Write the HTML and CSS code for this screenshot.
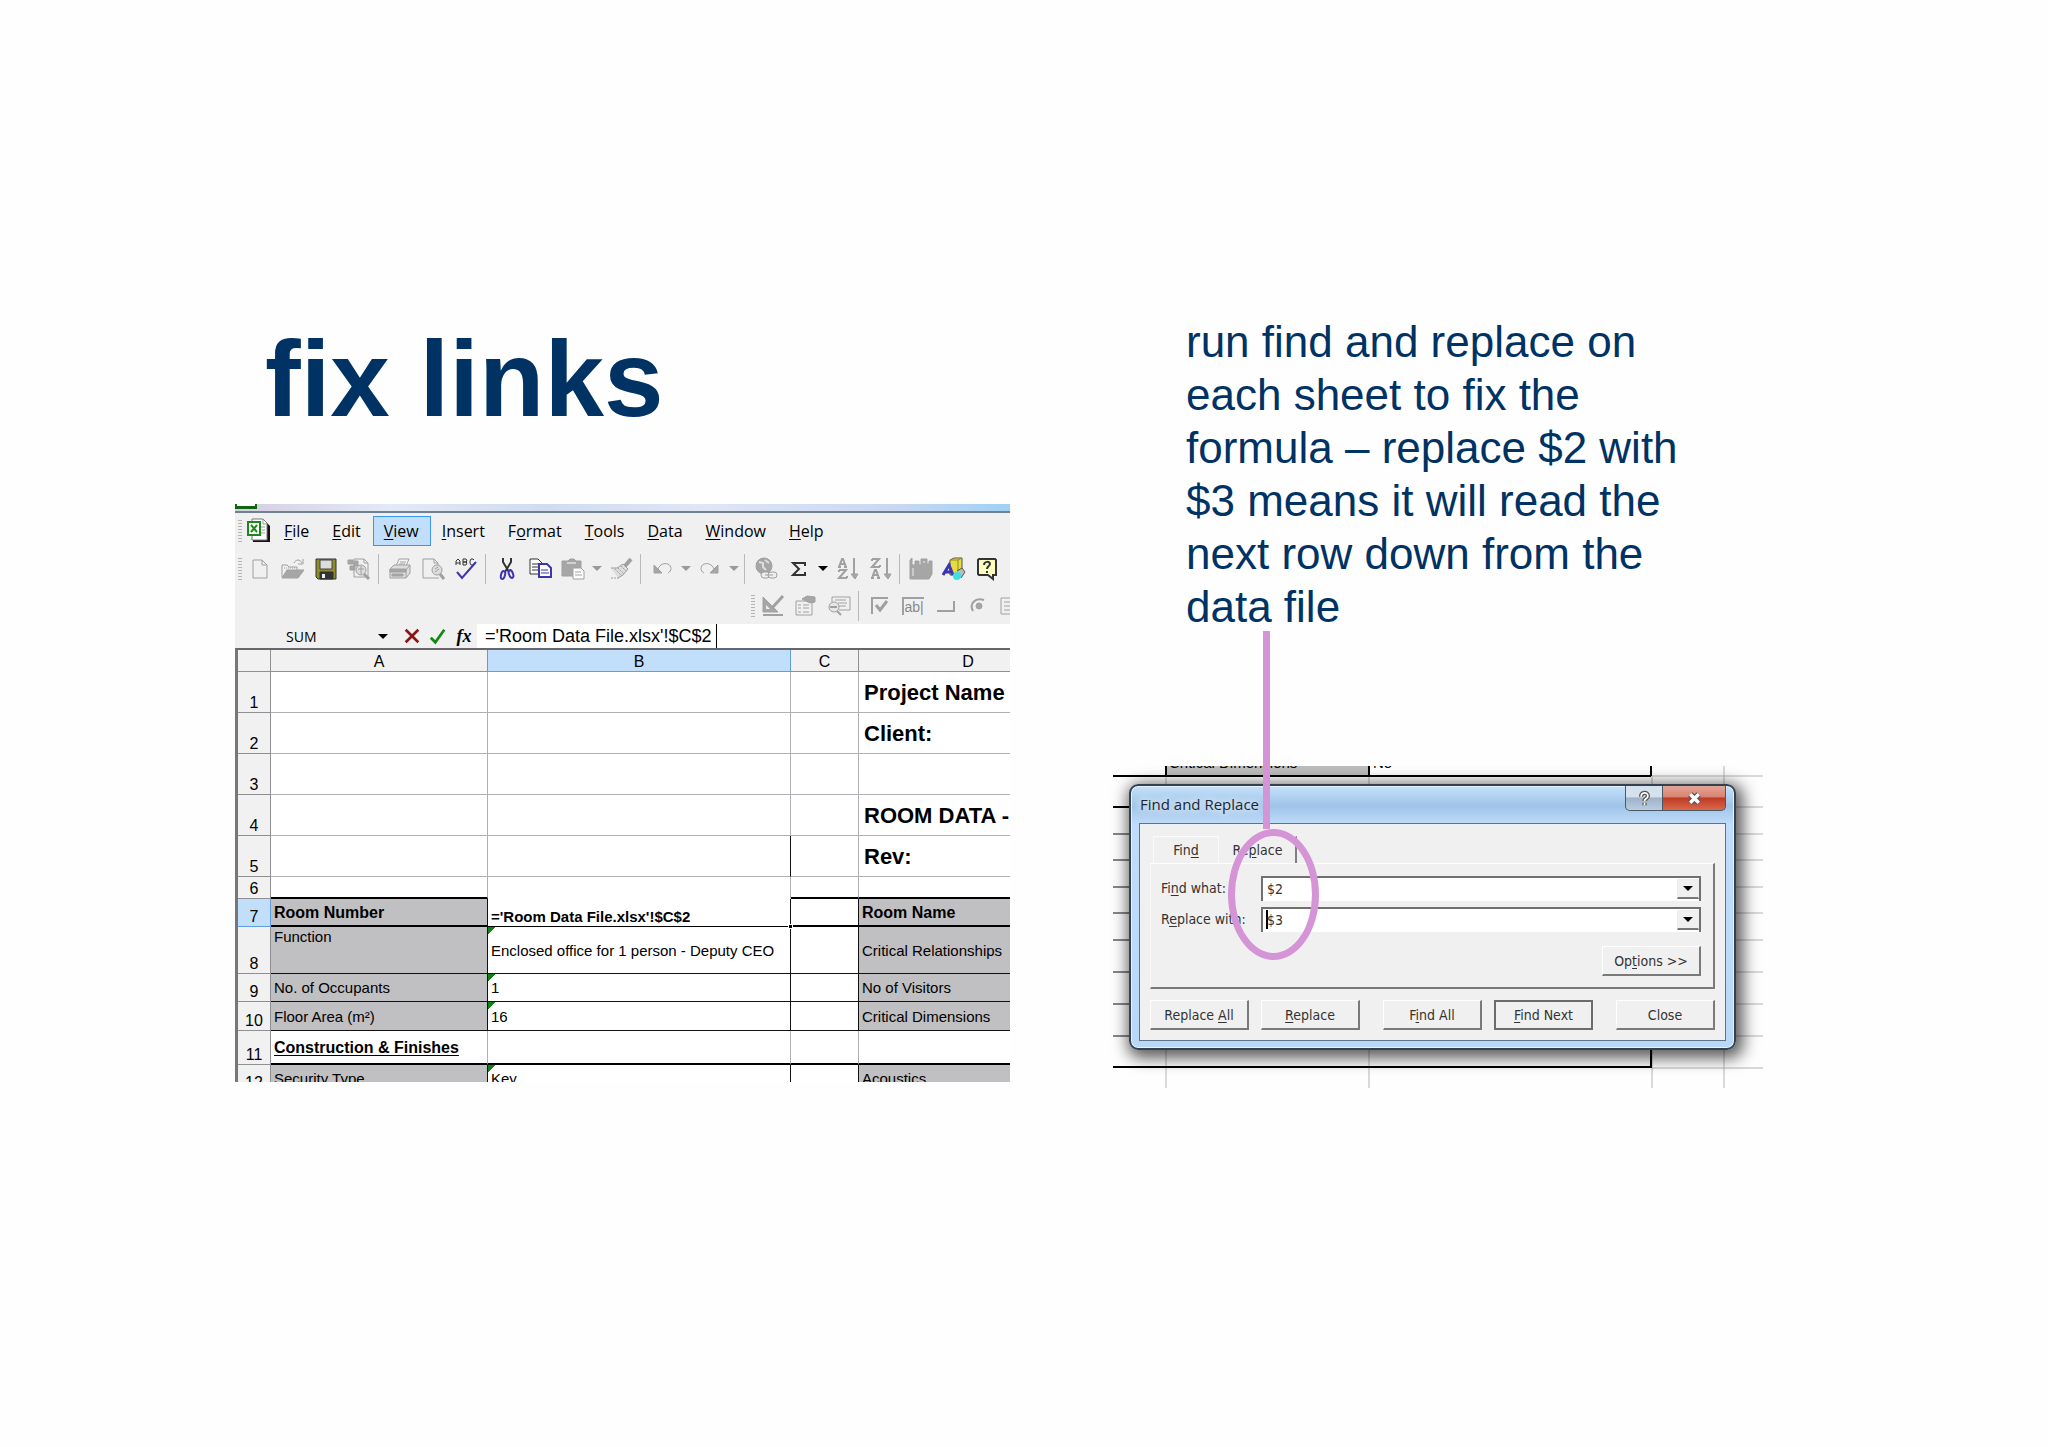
FILE: index.html
```html
<!DOCTYPE html>
<html lang="en">
<head>
<meta charset="utf-8">
<meta name="viewport" content="width=device-width, initial-scale=1">
<title>fix links</title>
<link rel="stylesheet" href="styles.css">
</head>
<body>
<main class="slide">
  <section class="left">
    <h1 class="title">fix links</h1>
    <div class="excel">
      <div class="titlebar"><span class="titlebar-icon"></span></div>
      <nav class="menubar">
        <span class="grip"></span>
        <svg class="app-icon" viewBox="0 0 26 26" aria-hidden="true"><path d="M6 3h12l5 5v16H6z" fill="#111"/><path d="M5 1h11l4 4v17H5z" fill="#fff" stroke="#777"/><path d="M16 1v5h4M13 9h5M15 12h3M13 15h5" fill="none" stroke="#999"/><path d="M1 4h12v13H1z" fill="#fff" stroke="#178a17" stroke-width="2"/><path d="M4 7l6 7M10 7l-6 7" stroke="#178a17" stroke-width="2"/></svg>
        <button class="menu"><u>F</u>ile</button>
        <button class="menu"><u>E</u>dit</button>
        <button class="menu menu-active"><u>V</u>iew</button>
        <button class="menu"><u>I</u>nsert</button>
        <button class="menu">F<u>o</u>rmat</button>
        <button class="menu"><u>T</u>ools</button>
        <button class="menu"><u>D</u>ata</button>
        <button class="menu"><u>W</u>indow</button>
        <button class="menu"><u>H</u>elp</button>
      </nav>
      <div class="toolbar">
        <span class="grip"></span>
        <button class="tool" aria-label="New"><svg viewBox="0 0 24 24"><path d="M5 3h9l5 5v13H5zM14 3v5h5"/></svg></button>
        <button class="tool" aria-label="Open"><svg viewBox="0 0 24 24"><path d="M1 20V8h5l2 2h8v3"/><path class="fill" d="M6 13h17l-6 8H1z"/><path d="M13 6c2-4 6-4 8 0M22 2v5h-5"/><path d="M3 11h12" stroke-dasharray="1 1"/></svg></button>
        <button class="tool" aria-label="Save"><svg viewBox="0 0 24 24"><path d="M2 2h20v20H4l-2-2z" fill="#8c8c28" stroke="#333"/><path d="M6 3h12v9H6z" fill="#ddd" stroke="#444"/><path d="M6 15h13v7H6z" fill="#333" stroke="#333"/><path d="M8 17h3v4H8z" fill="#eee" stroke="none"/></svg></button>
        <button class="tool" aria-label="Search"><svg viewBox="0 0 24 24"><path d="M7 2h10l4 4v14H7zM17 2v4h4"/><path class="fill" d="M1 3h5v4H1zM3 9h5v4H3zM7 4h4v5H7z"/><circle cx="14" cy="13" r="5" fill="#ddd"/><path d="M11 12h6M14 9v8"/><path d="M17 17l5 5" stroke-width="3"/></svg></button>
        <span class="sep"></span>
        <button class="tool" aria-label="Print"><svg viewBox="0 0 24 24"><path d="M8 9l3-7h10l-3 7z" fill="#f4f4f4"/><path d="M12 5h6M11 7h6"/><path d="M2 12l4-4h16v8l-4 5H2z" fill="#ddd"/><path class="fill" d="M2 12h16v3H2zM4 17h11v2H4z"/><path d="M18 13l4-5M18 21v-8"/></svg></button>
        <button class="tool" aria-label="Print preview"><svg viewBox="0 0 24 24"><path d="M18 21H2V2h11l4 4v3M13 2v4h4"/><circle cx="16" cy="13" r="5" fill="#ddd"/><path d="M14 12l3-2M14 15l4-3"/><path d="M19 17l4 5" stroke-width="3"/></svg></button>
        <button class="tool" aria-label="Spelling"><svg viewBox="0 0 24 24"><path d="M2 8V4l2-2 2 2v4M2 6h4M9 2v6h3l1-2-1-1H9h3l1-1-1-2H9M20 3l-1-1h-2l-1 2v2l1 2h2l1-1" stroke="#333"/><path d="M3 15l5 6L22 5" stroke="#3c35b0" stroke-width="2"/></svg></button>
        <span class="sep"></span>
        <button class="tool" aria-label="Cut"><svg viewBox="0 0 24 24"><path d="M8 1v4l6 10M16 1v4l-6 10" stroke="#333" stroke-width="2"/><ellipse cx="8" cy="18" rx="2" ry="4" stroke="#3c35b0" stroke-width="2" transform="rotate(15 8 18)"/><ellipse cx="16" cy="17" rx="2" ry="4" stroke="#3c35b0" stroke-width="2" transform="rotate(-20 16 17)"/></svg></button>
        <button class="tool" aria-label="Copy"><svg viewBox="0 0 24 24"><path d="M2 2h8l4 4v11H2z" fill="#fff" stroke="#333"/><path d="M4 7h7M4 10h7M4 13h7" stroke="#333"/><path d="M11 7h8l4 4v9H11z" fill="#fff" stroke="#3c35b0" stroke-width="2"/><path d="M13 13h7M13 16h8" stroke="#3c35b0"/></svg></button>
        <button class="tool" aria-label="Paste"><svg viewBox="0 0 24 24"><path class="fill" d="M1 4h6l2-2h4l2 2h5v15H1z"/><path d="M6 6h9" stroke="#fff"/><path d="M12 11h8l3 3v8H12z" fill="#fff"/><path d="M14 15h6M14 18h7"/></svg></button>
        <button class="drop" aria-label="Paste options"></button>
        <button class="tool" aria-label="Format painter"><svg viewBox="0 0 24 24"><path d="M22 2l-6 7" stroke-width="4"/><path d="M2 11h6l6-4 5 5-5 6-5 3" fill="#ddd"/><path d="M6 12l7 7M9 11l6 6M12 9l5 5M2 21h8" stroke-dasharray="2 1"/></svg></button>
        <span class="sep"></span>
        <button class="tool" aria-label="Undo"><svg viewBox="0 0 24 24"><path class="fill" d="M4 8v8h8z"/><path d="M8 12c2-5 6-6 10-5 4 2 4 7 0 9"/></svg></button>
        <button class="drop" aria-label="Undo list"></button>
        <button class="tool" aria-label="Redo"><svg viewBox="0 0 24 24"><path class="fill" d="M20 8v8h-8z"/><path d="M16 12c-2-5-6-6-10-5-4 2-4 7 0 9"/></svg></button>
        <button class="drop" aria-label="Redo list"></button>
        <span class="sep"></span>
        <button class="tool" aria-label="Hyperlink"><svg viewBox="0 0 24 24"><circle class="fill" cx="10" cy="9" r="8"/><path d="M5 5l4 1v4l3 3M11 3l4 3" stroke="#ddd" stroke-width="2"/><rect x="7" y="15" width="9" height="6" rx="3" fill="#eee"/><rect x="14" y="15" width="9" height="6" rx="3" fill="#eee"/><path d="M11 18h8"/></svg></button>
        <button class="tool" aria-label="AutoSum"><svg viewBox="0 0 24 24"><path d="M18 9V6H6l6 6-6 6h12v-3" stroke="#333" stroke-width="2"/></svg></button>
        <button class="drop drop-on" aria-label="AutoSum functions"></button>
        <button class="tool" aria-label="Sort ascending"><svg viewBox="0 0 24 24"><path d="M4 10l3-8h1l3 8M5 7h5M3 10h3M9 10h3M4 13h7l-7 8h8M4 13v2M12 21v-2M19 1v19" stroke-width="2"/><path class="fill" d="M16 17h7l-3 5z"/></svg></button>
        <button class="tool" aria-label="Sort descending"><svg viewBox="0 0 24 24"><path d="M4 2h7l-7 8h8M4 2v2M12 10V8M4 21l3-8h1l3 8M5 18h5M3 21h3M9 21h3M19 1v19" stroke-width="2"/><path class="fill" d="M16 17h7l-3 5z"/></svg></button>
        <span class="sep"></span>
        <button class="tool" aria-label="Chart"><svg viewBox="0 0 24 24"><path class="fill" d="M1 21V3l2-2v7h3V4h4v4h2V2h6v5h2V4h3v13l-3 5H1z"/><path d="M14 5h2M4 11v8" stroke="#eee"/></svg></button>
        <button class="tool" aria-label="Drawing"><svg viewBox="0 0 24 24"><path d="M8 3l4-2h8v14l-4 3H8z" fill="#e8dc3c" stroke="#555"/><path d="M8 3h8v14M16 3l4-2" stroke="#8c8c28"/><path d="M1 18L7 8l4 10M3 15h7" stroke="#3c35b0" stroke-width="3"/><path d="M15 14l5-3 3 4-4 6" fill="#bbb" stroke="#555"/><circle cx="15" cy="19" r="4" fill="#3ce0e8" stroke="none"/></svg></button>
        <button class="tool" aria-label="Help"><svg viewBox="0 0 24 24"><path d="M4 2h16l1 1v15h-3v4l-5-4H4l-1-1V3z" fill="#fffcc0" stroke="#333" stroke-width="2"/><path d="M9 8c0-4 6-4 6-1 0 2-3 2-3 5M12 14v2" stroke="#333" stroke-width="2"/></svg></button>
      </div>
      <div class="toolbar toolbar-controls">
        <span class="grip"></span>
        <button class="tool" aria-label="Design mode"><svg viewBox="0 0 24 24"><path class="fill" d="M2 3l15 15H2z"/><path d="M5 11l4 4H5z" fill="#eee" stroke="none"/><path d="M2 21h20" stroke-width="2"/><path d="M22 2L11 14" stroke-width="3"/></svg></button>
        <button class="tool" aria-label="Properties"><svg viewBox="0 0 24 24"><path d="M2 7h16v14H2zM4 11h3M9 11h6M4 14h3M9 14h6M4 18h3M9 18h6"/><path class="fill" d="M8 5l5-3 8 1v5l-5 1z"/></svg></button>
        <button class="tool" aria-label="View code"><svg viewBox="0 0 24 24"><path d="M5 8V3h18v13H12M8 6h11M11 9h9M12 12h7"/><circle cx="7" cy="13" r="5" fill="#e6e6e6"/><path d="M3 13h7M10 17l4 4" stroke-width="2"/></svg></button>
        <span class="sep"></span>
        <button class="tool" aria-label="Check box"><svg viewBox="0 0 24 24"><path d="M4 20V4h16" stroke-width="2"/><path d="M8 11l4 5 7-9" stroke-width="3"/></svg></button>
        <button class="tool tool-ab" aria-label="Text box">ab|</button>
        <button class="tool" aria-label="Command button"><svg viewBox="0 0 24 24"><path d="M3 17h17V7" stroke-width="2"/></svg></button>
        <button class="tool" aria-label="Option button"><svg viewBox="0 0 24 24"><path d="M6 17C2 10 8 3 17 6" stroke-width="2"/><circle class="fill" cx="12" cy="12" r="3"/></svg></button>
        <button class="tool" aria-label="List box"><svg viewBox="0 0 24 24"><path d="M1 4h20v16H1zM4 8h9M4 12h9M4 16h9"/></svg></button>
      </div>
      <div class="formula-bar">
        <input class="name-box" aria-label="Name box" value="SUM">
        <button class="drop drop-on" aria-label="Name list"></button>
        <button class="fx-button" aria-label="Cancel"><svg viewBox="0 0 20 20"><path d="M3 3l14 14M17 3L3 17" stroke="#8c1414" stroke-width="3"/></svg></button>
        <button class="fx-button" aria-label="Enter"><svg viewBox="0 0 20 20"><path d="M2 12l5 5L17 3" stroke="#128a12" stroke-width="3"/></svg></button>
        <button class="fx-button fx" aria-label="Insert function">fx</button>
        <div class="formula"><input class="formula-input" aria-label="Formula" value="='Room Data File.xlsx'!$C$2"><span class="caret"></span></div>
      </div>
      <div class="sheet">
        <table class="cells">
          <colgroup><col class="col-head"><col class="col-a"><col class="col-b"><col class="col-c"><col class="col-d"></colgroup>
          <thead><tr class="r-head"><th></th><th>A</th><th class="sel">B</th><th>C</th><th>D</th></tr></thead>
          <tbody>
            <tr class="r-tall"><th>1</th><td></td><td></td><td></td><td class="big">Project Name</td></tr>
            <tr class="r-tall"><th>2</th><td></td><td></td><td></td><td class="big">Client:</td></tr>
            <tr class="r-tall"><th>3</th><td></td><td></td><td></td><td></td></tr>
            <tr class="r-tall"><th>4</th><td></td><td></td><td></td><td class="big">ROOM DATA -</td></tr>
            <tr class="r-tall"><th>5</th><td></td><td class="ink-right"></td><td></td><td class="big">Rev:</td></tr>
            <tr class="r-6"><th>6</th><td class="thick"></td><td class="open"></td><td class="thick"></td><td class="thick"></td></tr>
            <tr class="r-7"><th class="sel">7</th><td class="gray thick name ink-right">Room Number</td><td class="editing ink-right">='Room Data File.xlsx'!$C$2<span class="handle"></span></td><td class="thick ink-right"></td><td class="gray thick name">Room Name</td></tr>
            <tr class="r-8 ink"><th>8</th><td class="gray top">Function</td><td class="flag">Enclosed office for 1 person - Deputy CEO</td><td></td><td class="gray">Critical Relationships</td></tr>
            <tr class="r-9 ink"><th>9</th><td class="gray">No. of Occupants</td><td class="flag">1</td><td></td><td class="gray">No of Visitors</td></tr>
            <tr class="r-10 ink"><th>10</th><td class="gray">Floor Area (m²)</td><td class="flag">16</td><td></td><td class="gray">Critical Dimensions</td></tr>
            <tr class="r-11"><th>11</th><td class="thick section"><u>Construction &amp; Finishes</u></td><td class="thick"></td><td class="thick"></td><td class="thick"></td></tr>
            <tr class="r-12 ink"><th>12</th><td class="gray">Security Type</td><td class="flag">Key</td><td></td><td class="gray">Acoustics</td></tr>
          </tbody>
        </table>
      </div>
    </div>
  </section>

  <section class="right">
    <p class="lead">run find and replace on each sheet to fix the formula – replace $2 with $3 means it will read the next row down from the data file</p>
    <div class="shot">
      <svg class="grid-lines" viewBox="0 0 650 322" preserveAspectRatio="none" aria-hidden="true">
        <rect x="52" y="0" width="204" height="10" fill="#bdbdbd"/>
        <g font-family="Liberation Sans, sans-serif" font-size="15"><text x="56" y="2">Critical Dimensions</text><text x="260" y="2">No</text></g>
        <path d="M53 10v312M256 10v312M539 10v312M611 0v322M539 10h111M539 41h111M539 68h111M539 94h111M539 121h111M539 147h111M539 174h111M539 206h111M539 238h111M539 270h111M539 302h111" stroke="#b4b4b4" fill="none"/>
        <path d="M0 68h40M0 94h40M0 121h40M0 147h40M0 174h40M0 206h40M0 238h40M0 270h40" stroke="#111" fill="none"/>
        <path d="M0 10h538M0 41h40M0 301h538M538 302V270M538 0v10M53 0v10M256 0v10" stroke="#000" stroke-width="2" fill="none"/>
      </svg>
      <form class="dialog" onsubmit="return false">
        <header class="caption">
          <span class="caption-text">Find and Replace</span>
          <button class="cap-button cap-help" type="button" aria-label="Help"><svg viewBox="0 0 20 20"><path d="M6 8c0-6 8-6 8-1 0 3-4 3-4 6M10 15v3" stroke="#555" stroke-width="5"/><path d="M6 8c0-6 8-6 8-1 0 3-4 3-4 6M10 15v3" stroke="#fff" stroke-width="2"/></svg></button>
          <button class="cap-button cap-close" type="button" aria-label="Close window"><svg viewBox="0 0 20 20"><path d="M5 5l10 10M15 5L5 15" stroke="#555" stroke-width="7"/><path d="M5 5l10 10M15 5L5 15" stroke="#fff" stroke-width="4"/></svg></button>
        </header>
        <div class="client">
          <div class="tabs">
            <button class="tab" type="button">Fin<u>d</u></button>
            <button class="tab tab-active" type="button">Re<u>p</u>lace</button>
          </div>
          <div class="panel">
            <div class="field">
              <label class="field-label" for="find">Fi<u>n</u>d what:</label>
              <div class="combo"><input class="combo-input" id="find" value="$2"><button class="combo-button" type="button" aria-label="Find history"></button></div>
            </div>
            <div class="field">
              <label class="field-label" for="replace">R<u>e</u>place with:</label>
              <div class="combo"><span class="caret caret-replace"></span><input class="combo-input" id="replace" value="$3"><button class="combo-button" type="button" aria-label="Replace history"></button></div>
            </div>
            <button class="push options" type="button">Op<u>t</u>ions &gt;&gt;</button>
          </div>
          <div class="actions">
            <div class="pair"><button class="push" type="button">Replace <u>A</u>ll</button><button class="push" type="button"><u>R</u>eplace</button></div>
            <div class="pair"><button class="push" type="button">F<u>i</u>nd All</button><button class="push push-default" type="button"><u>F</u>ind Next</button></div>
            <button class="push" type="button">Close</button>
          </div>
        </div>
      </form>
      <span class="callout-line"></span>
      <span class="callout-ring"></span>
    </div>
  </section>
</main>
</body>
</html>
```
FILE: styles.css
```css
* { box-sizing: border-box; }
body {
  margin: 0;
  background: #fefefe;
  color: #000;
  font-family: "Liberation Sans", Arial, sans-serif;
}
button, input { margin: 0; padding: 0; border: 0; background: none; font: inherit; color: inherit; border-radius: 0; }
u { text-underline-offset: 2px; }

.slide {
  display: grid;
  grid-template-columns: minmax(0, 775fr) minmax(0, 650fr);
  column-gap: 103px;
  min-height: 100vh;
  padding: 315px 285px 0 235px;
  align-items: start;
}
.title {
  margin: 4px 0 65px;
  padding-left: 30px;
  font-size: 107px;
  line-height: 120px;
  font-variant-ligatures: none;
  color: #003264;
}
.lead {
  max-width: 578px;
  margin: 0 0 133px;
  padding-left: 73px;
  font-size: 44px;
  line-height: 53px;
  color: #003264;
}

/* Spreadsheet window */
.excel { height: 578px; overflow: hidden; background: #f0f0f1; }
.titlebar {
  height: 9px;
  border-bottom: 2px solid #71808e;
  background: linear-gradient(90deg, #d3cfe0, #e4e9f6 20%, #cfdcf0 40%, #dfe6f6 60%, #c9d8f2 85%, #9fd0f6);
}
.titlebar-icon { display: block; width: 22px; height: 5px; border: solid #126312; border-width: 0 2px 3px; background: #fff; }
.menubar { display: flex; align-items: center; height: 37px; padding-bottom: 2px; font-family: "Open Sans", "Noto Sans", sans-serif; font-size: 16px; }
.grip { flex: none; width: 4px; height: 22px; margin: 0 1px 0 3px; background: repeating-linear-gradient(#b4b4b4 0 1px, #f0f0f1 1px 3px); }
.app-icon { flex: none; width: 26px; height: 26px; margin: 0 0 0 4px; }
.menu { height: 30px; padding: 0 11px 0 10px; border: 1px solid transparent; white-space: nowrap; }
.menu-active { border-color: #3c96f0; background: #c1dffb; }

.toolbar { display: flex; align-items: center; height: 37px; }
.toolbar-controls { padding-left: 513px; }
.tool { flex: none; display: flex; align-items: center; justify-content: center; width: 33px; height: 30px; }
.tool svg { width: 24px; height: 24px; fill: none; stroke: #a0a0a0; stroke-width: 1; }
.tool .fill { fill: #a6a6a6; }
.tool-ab { width: 22px; height: 18px; margin: 0 5px 0 6px; border: solid #a0a0a0; border-width: 2px 0 0 2px; font-size: 14px; color: #888; }
.sep { flex: none; width: 1px; height: 30px; margin: 0 4px 0 3px; background: #b9b9b9; }
.drop { flex: none; width: 15px; height: 30px; padding: 0 3px; color: #999; }
.drop::before, .combo-button::before { content: ""; display: block; width: 0; margin: 0 auto; border: 5px solid transparent; border-top: 5px solid currentColor; border-bottom: 0; }
.drop-on { color: #000; }

.formula-bar { display: flex; align-items: stretch; height: 24px; }
.name-box { width: 140px; padding-left: 51px; font-family: "Open Sans", "Noto Sans", sans-serif; font-size: 14px; }
.formula-bar .drop { height: 24px; margin-right: 9px; }
.fx-button { flex: none; display: flex; align-items: center; justify-content: center; width: 26px; }
.fx-button svg { width: 18px; height: 18px; fill: none; }
.fx { font-family: "Liberation Serif", serif; font-size: 18px; font-style: italic; font-weight: bold; }
.formula { position: relative; flex: 1; background: #fff; }
.formula-input { width: 100%; height: 24px; padding-left: 8px; font-size: 18px; }
.caret { position: absolute; left: 239px; top: 0; width: 1px; height: 24px; background: #000; }

.sheet { border-top: 2px solid #66666b; border-left: 3px solid #77777b; overflow: hidden; }
.cells { width: 840px; table-layout: fixed; border-collapse: separate; border-spacing: 0; font-size: 15px; line-height: 18px; background: #fff; }
.col-head { width: 33px; }
.col-a { width: 217px; }
.col-b { width: 303px; }
.col-c { width: 68px; }
.col-d { width: 219px; }
.cells th, .cells td { padding: 1px 3px 0; border: solid #b0b0b4; border-width: 0 1px 1px 0; white-space: nowrap; text-align: left; vertical-align: middle; }
.cells th { padding: 0; border-color: #909094; background: #f1f1f2; font-size: 16px; font-weight: normal; text-align: center; vertical-align: bottom; }
.cells .sel { border-color: #5f9fe0; background: #c1dffb; }
.r-head { height: 22px; }
.r-tall { height: 41px; }
.r-6 { height: 22px; }
.r-7 { height: 28px; }
.r-8 { height: 47px; }
.r-9 { height: 28px; }
.r-10 { height: 29px; }
.r-11 { height: 34px; }
.r-12 { height: 28px; }
.cells .big { padding: 2px 5px 0; font-size: 22px; font-weight: bold; }
.cells .gray { background: #c0bfc1; }
.cells .name { padding-top: 2px; font-size: 16px; font-weight: bold; }
.cells .section { font-size: 16px; font-weight: bold; }
.cells .top { vertical-align: top; }
.cells .ink td { border-color: #111; }
.cells .ink-right { border-right-color: #111; }
.cells .thick { border-bottom: 2px solid #000; }
.cells .open { border-bottom-color: #fff; }
.cells .editing { position: relative; border-bottom-color: #000; font-size: 15px; font-weight: bold; vertical-align: bottom; }
.handle { position: absolute; right: -3px; bottom: -3px; width: 5px; height: 5px; border: 1px solid #fff; background: #000; }
.cells .flag { background: linear-gradient(135deg, #128012 5px, transparent 5px) no-repeat #fff; }

/* Find and Replace window */
.shot { position: relative; padding: 18px 27px 38px 16px; }
.grid-lines { position: absolute; inset: 0; width: 100%; height: 100%; overflow: hidden; }
.dialog {
  position: relative;
  height: 266px;
  padding: 0 8px 8px;
  border: 2px solid #35414f;
  border-radius: 9px;
  background: linear-gradient(#c4e1fb, #9fc4e8 20px, #bfdcfa 38px, #b9d8f8);
  box-shadow: 3px 4px 16px 4px rgba(0, 0, 0, .65), inset 0 0 0 1px #e3f2fd;
  font-family: "DejaVu Sans Condensed", "DejaVu Sans", sans-serif;
  font-size: 14px;
  color: #333;
}
.caption { display: flex; align-items: flex-start; height: 37px; }
.caption-text { flex: 1; padding-left: 1px; font-family: "Open Sans", "Noto Sans", sans-serif; font-size: 15px; line-height: 36px; color: #1c2733; text-shadow: 0 0 8px #fff, 0 0 8px #fff; }
.cap-button { display: flex; align-items: center; justify-content: center; height: 25px; border: 1px solid #4b5866; border-top: 0; }
.cap-button svg { width: 17px; height: 17px; fill: none; }
.cap-help { width: 38px; border-radius: 0 0 0 5px; background: linear-gradient(#d5e2ee 45%, #9fb3c8 50%, #b9cde0); }
.cap-close { width: 63px; border-left: 0; border-radius: 0 0 5px 0; background: linear-gradient(#e5a597, #d98372 45%, #bf3a24 50%, #d8694e); }
.client { height: 218px; padding: 12px 10px 9px; border: 1px solid #5f7386; background: #f0f0f0; }
.tabs { display: flex; height: 27px; padding-left: 3px; }
.tab { width: 66px; height: 27px; border: 1px solid #fafafa; border-bottom: 0; }
.tab-active { width: 78px; border-color: transparent; border-right: 2px solid #808080; }
.panel { height: 126px; padding: 12px 12px 0 10px; border: solid; border-width: 1px 2px 2px 1px; border-color: #fff #7a7a7a #7a7a7a #f8f8f8; }
.field { display: flex; align-items: flex-start; height: 31px; }
.field-label { width: 100px; line-height: 24px; white-space: nowrap; }
.combo { position: relative; display: flex; flex: 1; height: 25px; border: 2px solid #707070; border-bottom: 0; background: #fff; }
.combo-input { flex: 1; min-width: 0; height: 22px; padding-left: 4px; }
.combo-button { width: 22px; height: 20px; margin-top: 1px; border: 1px solid #eee; border-width: 1px 1px 2px 1px; border-bottom-color: #777; background: #f0f0f0; color: #000; }
.caret-replace { left: 3px; top: 1px; width: 2px; height: 19px; }
.push { width: 99px; height: 30px; border: 1px solid #fff; border-right: 2px solid #7a7a7a; border-bottom: 2px solid #7a7a7a; background: #f0f0f0; white-space: nowrap; }
.push-default { border: 2px solid #6c6c6c; }
.options { display: block; margin: 8px 0 0 auto; }
.actions { display: flex; justify-content: space-between; padding-top: 11px; }
.pair { display: flex; gap: 12px; }

/* Callout drawn over the dialog */
.callout-line { position: absolute; left: 150px; top: -135px; width: 7px; height: 198px; background: #d494d6; }
.callout-ring { position: absolute; left: 115px; top: 63px; width: 91px; height: 131px; border: 7px solid #d494d6; border-radius: 50%; }
```
